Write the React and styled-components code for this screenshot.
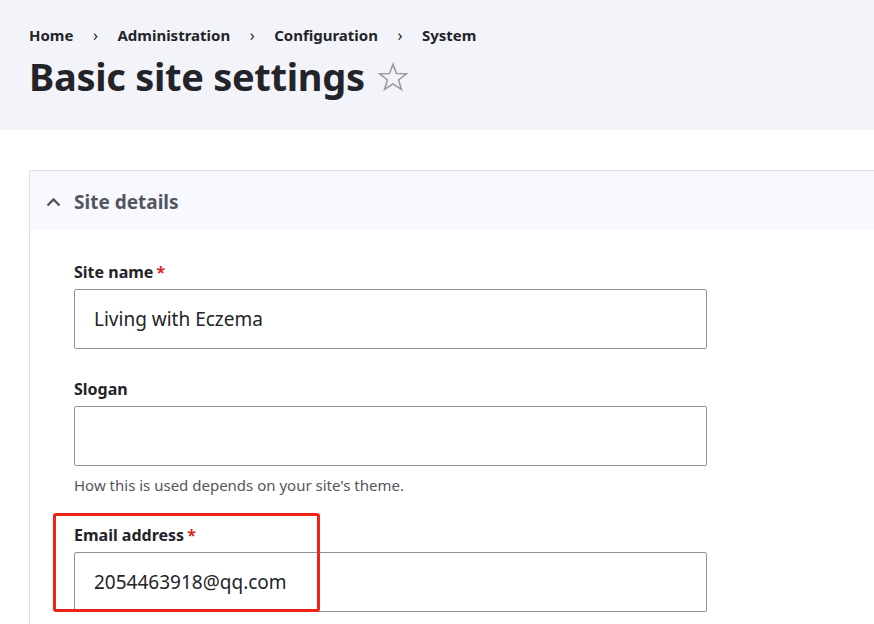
import styled, { createGlobalStyle } from "styled-components"

const GlobalStyle = createGlobalStyle`
  body {
    margin: 0;
    background: #fff;
    font-family: "Noto Sans", "Open Sans", sans-serif;
    color: #232429;
  }
`;

const Page = styled.div`
  width: 874px;
  height: 624px;
  overflow: hidden;
  position: relative;
`;

const Header = styled.div`
  background: #f3f4f9;
  height: 130px;
  padding: 24px 0 0 29px;
  box-sizing: border-box;
`;

const Breadcrumb = styled.nav`
  display: flex;
  align-items: center;
  gap: 19.5px;
  font-size: 15px;
  font-weight: 700;
  line-height: 22px;
  color: #232429;
`;

const Sep = styled.span`
  font-weight: 400;
  font-size: 16px;
`;

const TitleRow = styled.div`
  display: flex;
  align-items: center;
  gap: 12px;
  margin-top: 6px;
`;

const Title = styled.h1`
  margin: 0;
  font-size: 38px;
  font-weight: 700;
  line-height: 48px;
  letter-spacing: -0.3px;
`;

const Star = styled.svg`
  width: 32px;
  height: 32px;
  margin-top: 2px;
`;

const Main = styled.div`
  padding: 40px 0 0 29px;
`;

const Card = styled.div`
  border: 1px solid #dedfe4;
  border-right: none;
  border-radius: 2px 0 0 0;
  min-height: 500px;
`;

const CardHeader = styled.div`
  display: flex;
  align-items: center;
  gap: 13px;
  height: 59px;
  padding: 2px 0 0 16px;
  box-sizing: border-box;
  background: #f8f9fe;
  font-size: 19px;
  font-weight: 700;
  color: #545560;
`;

const CardBody = styled.div`
  padding: 30px 0 0 44px;
  display: flex;
  flex-direction: column;
  gap: 28px;
`;

const Field = styled.div`
  display: flex;
  flex-direction: column;
`;

const Label = styled.label`
  font-size: 16px;
  font-weight: 700;
  line-height: 24px;
  margin-bottom: 5px;
`;

const Req = styled.span`
  color: #dc2323;
  margin-left: 3px;
`;

const Input = styled.div`
  width: 633px;
  height: 60px;
  box-sizing: border-box;
  border: 1px solid #8e929c;
  border-radius: 2px;
  padding: 0 19px;
  display: flex;
  align-items: center;
  font-size: 19px;
  color: #232429;
`;

const Help = styled.div`
  margin-top: 10px;
  font-size: 15px;
  line-height: 19px;
  color: #55565b;
`;

const Highlight = styled.div`
  position: absolute;
  left: 53px;
  top: 513px;
  width: 267px;
  height: 99px;
  box-sizing: border-box;
  border: 3px solid #f02318;
  border-radius: 3px;
  pointer-events: none;
`;

export default function App() {
  return (
    <Page>
      <GlobalStyle />
      <Header>
        <Breadcrumb>
          <span>Home</span>
          <Sep>›</Sep>
          <span>Administration</span>
          <Sep>›</Sep>
          <span>Configuration</span>
          <Sep>›</Sep>
          <span>System</span>
        </Breadcrumb>
        <TitleRow>
          <Title>Basic site settings</Title>
          <Star viewBox="0 0 24 24" fill="none" stroke="#999aa3" strokeWidth="1.2" strokeLinejoin="miter">
            <path d="M12 2.5l2.6 6.9 7.4.2-5.8 4.6 2.1 7.1L12 17.2l-6.3 4.1 2.1-7.1L2 9.6l7.4-.2z" />
          </Star>
        </TitleRow>
      </Header>
      <Main>
        <Card>
          <CardHeader>
            <svg width="15" height="10" viewBox="0 0 15 10">
              <path d="M1.5 8.5L7.5 2.5 13.5 8.5" fill="none" stroke="#545560" strokeWidth="2.4" />
            </svg>
            Site details
          </CardHeader>
          <CardBody>
            <Field>
              <Label>Site name<Req>*</Req></Label>
              <Input>Living with Eczema</Input>
            </Field>
            <Field>
              <Label>Slogan</Label>
              <Input />
              <Help>How this is used depends on your site's theme.</Help>
            </Field>
            <Field>
              <Label>Email address<Req>*</Req></Label>
              <Input>2054463918@qq.com</Input>
            </Field>
          </CardBody>
        </Card>
      </Main>
      <Highlight />
    </Page>
  )
}
